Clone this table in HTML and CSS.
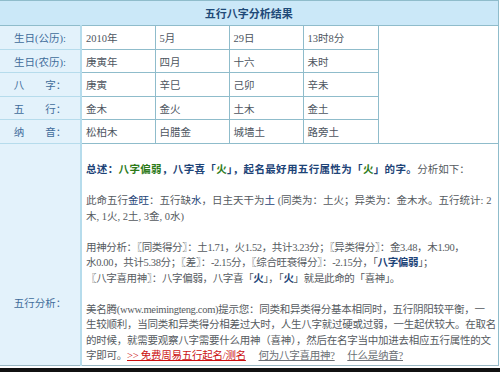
FILE: index.html
```html
<!DOCTYPE html>
<html lang="zh">
<head>
<meta charset="utf-8">
<link rel="stylesheet" href="styles.css">
</head>
<body>
<div class="page">
<table class="bz">
  <colgroup>
    <col class="c-label"><col class="c-val"><col class="c-val"><col class="c-val"><col class="c-val5"><col class="c-empty">
  </colgroup>
  <tr class="head"><th colspan="6">五行八字分析结果</th></tr>
  <tr class="row r1"><td class="lab">生日(公历):</td><td>2010年</td><td>5月</td><td>29日</td><td>13时8分</td><td class="empty" rowspan="5"></td></tr>
  <tr class="row r2"><td class="lab">生日(农历):</td><td>庚寅年</td><td>四月</td><td>十六</td><td>未时</td></tr>
  <tr class="row r1"><td class="lab">八　　字：</td><td>庚寅</td><td>辛巳</td><td>己卯</td><td>辛未</td></tr>
  <tr class="row r2"><td class="lab">五　　行：</td><td>金木</td><td>金火</td><td>土木</td><td>金土</td></tr>
  <tr class="row r1"><td class="lab">纳　　音：</td><td>松柏木</td><td>白腊金</td><td>城墙土</td><td>路旁土</td></tr>
  <tr class="big">
    <td class="lab big-lab">五行分析：</td>
    <td class="text" colspan="5">
      <p class="para"><span class="lead"><b class="blue">总述：</b><b class="green">八字偏弱</b><b class="blue">，八字喜「</b><b class="green">火</b><b class="blue">」，起名最好用五行属性为「</b><b class="green">火</b><b class="blue">」的字。</b></span>分析如下：</p>
      <p class="para">此命五行<span class="hl">金旺</span>：五行缺<span class="hl">水</span>，日主天干为<span class="hl">土</span> (同类为：土火；异类为：金木水。五行统计: 2<br>木, 1火, 2土, 3金, 0水)</p>
      <p class="para tight">用神分析：〖同类得分〗：土1.71，火1.52，共计3.23分；〖异类得分〗：金3.48，木1.90，<br>水0.00，共计5.38分；〖差〗：-2.15分，〖综合旺衰得分〗：-2.15分，「<b class="blue">八字偏弱</b>」；<br>〖八字喜用神〗：八字偏弱，八字喜「<b class="blue">火</b>」，「<b class="blue">火</b>」就是此命的「喜神」。</p>
      <p class="para note">美名腾<span class="url">(www.meimingteng.com)</span>提示您：同类和异类得分基本相同时，五行阴阳较平衡，一<br>生较顺利，当同类和异类得分相差过大时，人生八字就过硬或过弱，一生起伏较大。在取名<br>的时候，就需要观察八字需要什么用神（喜神），然后在名字当中加进去相应五行属性的文<br>字即可。<a class="red" href="#">&gt;&gt; 免费周易五行起名/测名</a>　 <a class="gray" href="#">何为八字喜用神?</a>　 <a class="gray" href="#">什么是纳音?</a></p>
    </td>
  </tr>
</table>
<div class="foot"></div>
</div>
</body>
</html>
```

FILE: styles.css
```css
html, body {
  margin: 0;
  padding: 0;
  background: #ffffff;
}
body {
  font-family: "Liberation Serif", "Noto Sans CJK SC", serif;
  font-size: 10.5px;
  color: #4d5560;
}
.page {
  width: 500px;
  height: 372px;
  overflow: hidden;
}
.bz {
  width: 498px;
  border-collapse: collapse;
  table-layout: fixed;
  border-top: 1px solid #8fbccb;
  border-right: 1px solid #8fbccb;
}
.c-label { width: 81px; }
.c-val { width: 74px; }
.c-val5 { width: 75px; }
.c-empty { width: 120px; }
.head th {
  height: 24px;
  padding: 0;
  background: #cbe8f8;
  color: #1f4a78;
  font-family: "Noto Sans CJK SC", sans-serif;
  font-size: 11px;
  font-weight: bold;
  text-align: center;
  border-bottom: 1px solid #8fbccb;
}
.row td {
  padding: 0 4px;
  border: 1px solid #8fbccb;
  white-space: nowrap;
  overflow: hidden;
}
.row.r1 td { height: 23px; }
.row.r2 td { height: 22px; }
.lab {
  background: #e3f2fb;
  color: #3f6c9a;
  text-align: center;
}
.row td.lab {
  border-left: 0;
  border-right: 2px solid #b6dcec;
  border-color: #b6dcec;
  padding: 0;
}
.row td.empty {
  border-top: 1px solid #8fbccb;
  border-bottom: 1px solid #8fbccb;
  background: #ffffff;
}
.big td {
  border-bottom: 1px solid #9ab8c4;
  border-top: 1px solid #8fbccb;
}
.big-lab {
  vertical-align: top;
  padding: 152px 0 0 0;
  border-right: 2px solid #b6dcec;
  line-height: 15.5px;
}
.text {
  vertical-align: top;
  padding: 18px 0 1px 4px;
  line-height: 15.5px;
  white-space: nowrap;
  overflow: hidden;
  color: #555a60;
}
.para {
  margin: 0 0 15.5px 0;
}
.para:last-child {
  margin-bottom: 0;
}
.tight {
  letter-spacing: -0.35px;
}
.note {
  letter-spacing: -0.25px;
}
.lead {
  letter-spacing: 0.35px;
}
.url {
  letter-spacing: -0.3px;
}
.blue { color: #1d4377; font-weight: bold; }
.hl { color: #1d4377; }
.green { color: #2c7a18; font-weight: bold; }
.red { color: #cc1111; text-decoration: underline; }
.gray { color: #6a6f75; text-decoration: underline; }
.foot {
  height: 6px;
  background: #111111;
  margin-top: 2px;
}
```
